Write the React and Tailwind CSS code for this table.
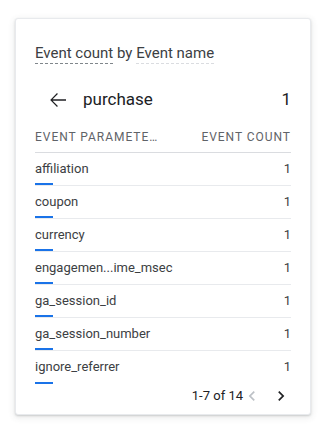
import React from "react";

const rows = [
  { name: "affiliation", count: 1 },
  { name: "coupon", count: 1 },
  { name: "currency", count: 1 },
  { name: "engagemen...ime_msec", count: 1 },
  { name: "ga_session_id", count: 1 },
  { name: "ga_session_number", count: 1 },
  { name: "ignore_referrer", count: 1 },
];

function ArrowBack() {
  return (
    <svg viewBox="0 0 24 24" className="h-6 w-6 fill-[#202124]">
      <path d="M20 11.25H6.6l5.3-5.3-.9-.9L4.2 12l6.8 6.95.9-.9-5.3-5.3H20z" />
    </svg>
  );
}

function Chevron({ dir = "right", className = "" }) {
  const d =
    dir === "left"
      ? "M15.41 7.41L14 6l-6 6 6 6 1.41-1.41L10.83 12z"
      : "M10 6L8.59 7.41 13.17 12l-4.58 4.59L10 18l6-6z";
  return (
    <svg viewBox="0 0 24 24" className={"h-5 w-5 " + className}>
      <path d={d} />
    </svg>
  );
}

export default function App() {
  return (
    <div className="min-h-[430px] w-[326px] bg-white pt-[18px] pl-[15px] font-['Roboto',sans-serif]">
      <div className="flex h-[397px] w-[296px] flex-col rounded-[3px] border border-[#e8eaed] bg-white px-[19px] pt-[24px] shadow-[0_1px_2px_rgba(60,64,67,0.2),0_2px_6px_1px_rgba(60,64,67,0.1)]">
        <div className="text-[15px] leading-5 text-[#3c4043]">
          <span className="border-b border-dashed border-[#80868b] pb-[1px]">
            Event count
          </span>{" "}
          by{" "}
          <span className="border-b border-dashed border-[#dadce0] pb-[1px]">
            Event name
          </span>
        </div>

        <div className="mt-[25px] flex h-6 items-center">
          <div className="ml-[11px]">
            <ArrowBack />
          </div>
          <div className="ml-[13px] flex-1 text-[17px] text-[#202124]">
            purchase
          </div>
          <div className="text-[17px] text-[#202124]">1</div>
        </div>

        <div className="mt-[17px] flex items-center justify-between border-b border-[#dadce0] pb-[7px] text-[12px] leading-4 tracking-[0.08em] text-[#5f6368]">
          <span>EVENT PARAMETE…</span>
          <span>EVENT COUNT</span>
        </div>

        {rows.map((r, i) => (
          <div
            key={r.name}
            className={
              "flex h-[33px] flex-col " +
              (i < rows.length - 1 ? "border-b border-[#e8eaed]" : "")
            }
          >
            <div className="flex items-center justify-between pt-[8px] text-[13px] leading-4 text-[#3c4043]">
              <span>{r.name}</span>
              <span>{r.count}</span>
            </div>
            <div className="mt-auto h-[2px] w-[18px] bg-[#1a73e8]" />
          </div>
        ))}

        <div className="mt-[2px] flex h-5 items-center justify-end text-[13px] text-[#202124]">
          <span>1-7 of 14</span>
          <Chevron dir="left" className="ml-[-1px] fill-[#bdc1c6]" />
          <Chevron dir="right" className="ml-[9px] fill-[#202124]" />
        </div>
      </div>
    </div>
  );
}
